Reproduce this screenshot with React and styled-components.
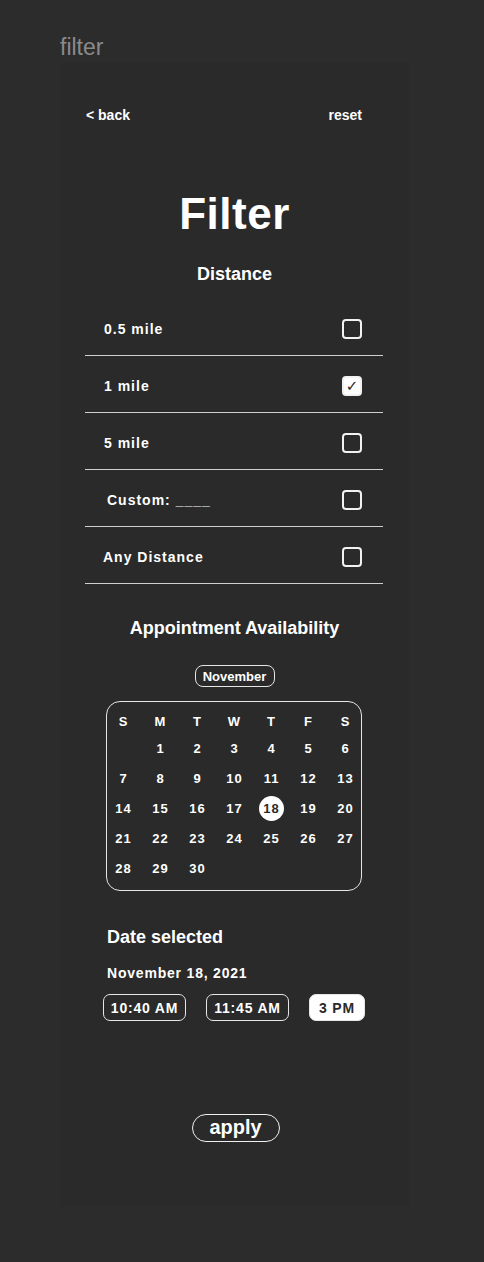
import React from 'react';
import styled, { createGlobalStyle } from 'styled-components';

const GlobalStyle = createGlobalStyle`
  body {
    margin: 0;
    background: #2c2c2c;
    font-family: "Liberation Sans", Arial, sans-serif;
    color: #fff;
  }
`;

const Page = styled.div`
  width: 484px;
  height: 1262px;
  padding-left: 60px;
  box-sizing: border-box;
`;

const PageLabel = styled.div`
  color: #8a8a8a;
  font-size: 23px;
  line-height: 26px;
  padding-top: 34px;
  height: 63px;
  box-sizing: border-box;
`;

const Frame = styled.div`
  width: 349px;
  height: 1144px;
  background: #2a2a2a;
  padding-top: 42px;
  box-sizing: border-box;
  display: flex;
  flex-direction: column;
`;

const TopBar = styled.div`
  display: flex;
  justify-content: space-between;
  padding: 0 47px 0 26px;
  font-size: 14px;
  font-weight: 700;
  line-height: 20px;
`;

const Title = styled.h1`
  margin: 67px 0 0;
  text-align: center;
  font-size: 44px;
  line-height: 44px;
  font-weight: 700;
  letter-spacing: 0.5px;
`;

const Heading = styled.h2`
  margin: ${p => p.$top}px 0 0;
  text-align: center;
  font-size: 18px;
  line-height: 18px;
  font-weight: 700;
`;

const List = styled.div`
  margin: 16px 26px 0 25px;
`;

const Row = styled.div`
  height: 57px;
  box-sizing: border-box;
  border-bottom: 1.5px solid #cfcfcf;
  display: flex;
  align-items: center;
  justify-content: space-between;
  padding: 4px 21px 0 ${p => p.$indent}px;
  font-size: 14px;
  font-weight: 700;
  letter-spacing: 1px;
`;

const Box = styled.div`
  width: 20px;
  height: 20px;
  box-sizing: border-box;
  border: 2px solid #f2f2f2;
  border-radius: 4px;
  background: ${p => (p.$on ? '#fff' : 'transparent')};
  color: #2a2a2a;
  display: flex;
  align-items: center;
  justify-content: center;
  font-size: 15px;
  letter-spacing: 0;
  font-family: "DejaVu Sans", sans-serif;
`;

const MonthPill = styled.div`
  align-self: center;
  margin-top: 28px;
  width: 80px;
  height: 22px;
  box-sizing: border-box;
  border: 1.5px solid #e6e6e6;
  border-radius: 8px;
  display: flex;
  align-items: center;
  justify-content: center;
  font-size: 13px;
  font-weight: 700;
`;

const Calendar = styled.div`
  margin: 14px 0 0 46px;
  width: 256px;
  height: 190px;
  box-sizing: border-box;
  border: 1.5px solid #e6e6e6;
  border-radius: 14px;
  padding-top: 7px;
  display: grid;
  grid-template-columns: repeat(7, 37px);
  grid-template-rows: 24px repeat(5, 30px);
  justify-content: center;
  align-content: start;
`;

const Cell = styled.div`
  display: flex;
  align-items: center;
  justify-content: center;
  font-size: 13px;
  font-weight: 700;
  letter-spacing: 1px;
  span {
    width: 25px;
    height: 25px;
    border-radius: 50%;
    display: flex;
    align-items: center;
    justify-content: center;
    padding-left: 1px;
    box-sizing: border-box;
    background: ${p => (p.$sel ? '#fff' : 'transparent')};
    color: ${p => (p.$sel ? '#2a2a2a' : '#fff')};
  }
`;

const DateBlock = styled.div`
  margin: 37px 0 0 47px;
`;

const DateTitle = styled.div`
  font-size: 18px;
  line-height: 18px;
  font-weight: 700;
`;

const DateText = styled.div`
  margin-top: 19px;
  font-size: 14px;
  line-height: 16px;
  font-weight: 700;
  letter-spacing: 0.8px;
`;

const Times = styled.div`
  display: flex;
  gap: 20px;
  margin: 13px 0 0 43px;
`;

const TimePill = styled.div`
  width: ${p => p.$w}px;
  height: 27px;
  box-sizing: border-box;
  border: 1.5px solid #e6e6e6;
  border-radius: 7px;
  background: ${p => (p.$on ? '#fff' : 'transparent')};
  color: ${p => (p.$on ? '#2a2a2a' : '#fff')};
  display: flex;
  align-items: center;
  justify-content: center;
  font-size: 14px;
  font-weight: 700;
  letter-spacing: 0.8px;
`;

const Apply = styled.button`
  align-self: center;
  margin: 93px 0 0 2px;
  width: 88px;
  height: 28px;
  box-sizing: border-box;
  border: 1.5px solid #f0f0f0;
  border-radius: 14px;
  background: transparent;
  color: #fff;
  font-family: "Liberation Sans", Arial, sans-serif;
  font-size: 20px;
  font-weight: 700;
  line-height: 20px;
  padding: 0 0 2px;
`;

const distances = [
  { label: '0.5 mile', indent: 19 },
  { label: '1 mile', indent: 19, on: true },
  { label: '5 mile', indent: 19 },
  { label: 'Custom: ____', indent: 22 },
  { label: 'Any Distance', indent: 18 },
];

const days = ['S', 'M', 'T', 'W', 'T', 'F', 'S'];
const dates = ['', ...Array.from({ length: 30 }, (_, i) => String(i + 1))];

export default function App() {
  return (
    <Page>
      <GlobalStyle />
      <PageLabel>filter</PageLabel>
      <Frame>
        <TopBar>
          <span>&lt; back</span>
          <span>reset</span>
        </TopBar>
        <Title>Filter</Title>
        <Heading $top={29}>Distance</Heading>
        <List>
          {distances.map(d => (
            <Row key={d.label} $indent={d.indent}>
              <span>{d.label}</span>
              <Box $on={d.on}>{d.on ? '✓' : ''}</Box>
            </Row>
          ))}
        </List>
        <Heading $top={35}>Appointment Availability</Heading>
        <MonthPill>November</MonthPill>
        <Calendar>
          {days.map((d, i) => (
            <Cell key={'h' + i}><span>{d}</span></Cell>
          ))}
          {dates.map((d, i) => (
            <Cell key={'d' + i} $sel={d === '18'}><span>{d}</span></Cell>
          ))}
        </Calendar>
        <DateBlock>
          <DateTitle>Date selected</DateTitle>
          <DateText>November 18, 2021</DateText>
        </DateBlock>
        <Times>
          <TimePill $w={83}>10:40 AM</TimePill>
          <TimePill $w={83}>11:45 AM</TimePill>
          <TimePill $w={56} $on>3 PM</TimePill>
        </Times>
        <Apply>apply</Apply>
      </Frame>
    </Page>
  );
}
